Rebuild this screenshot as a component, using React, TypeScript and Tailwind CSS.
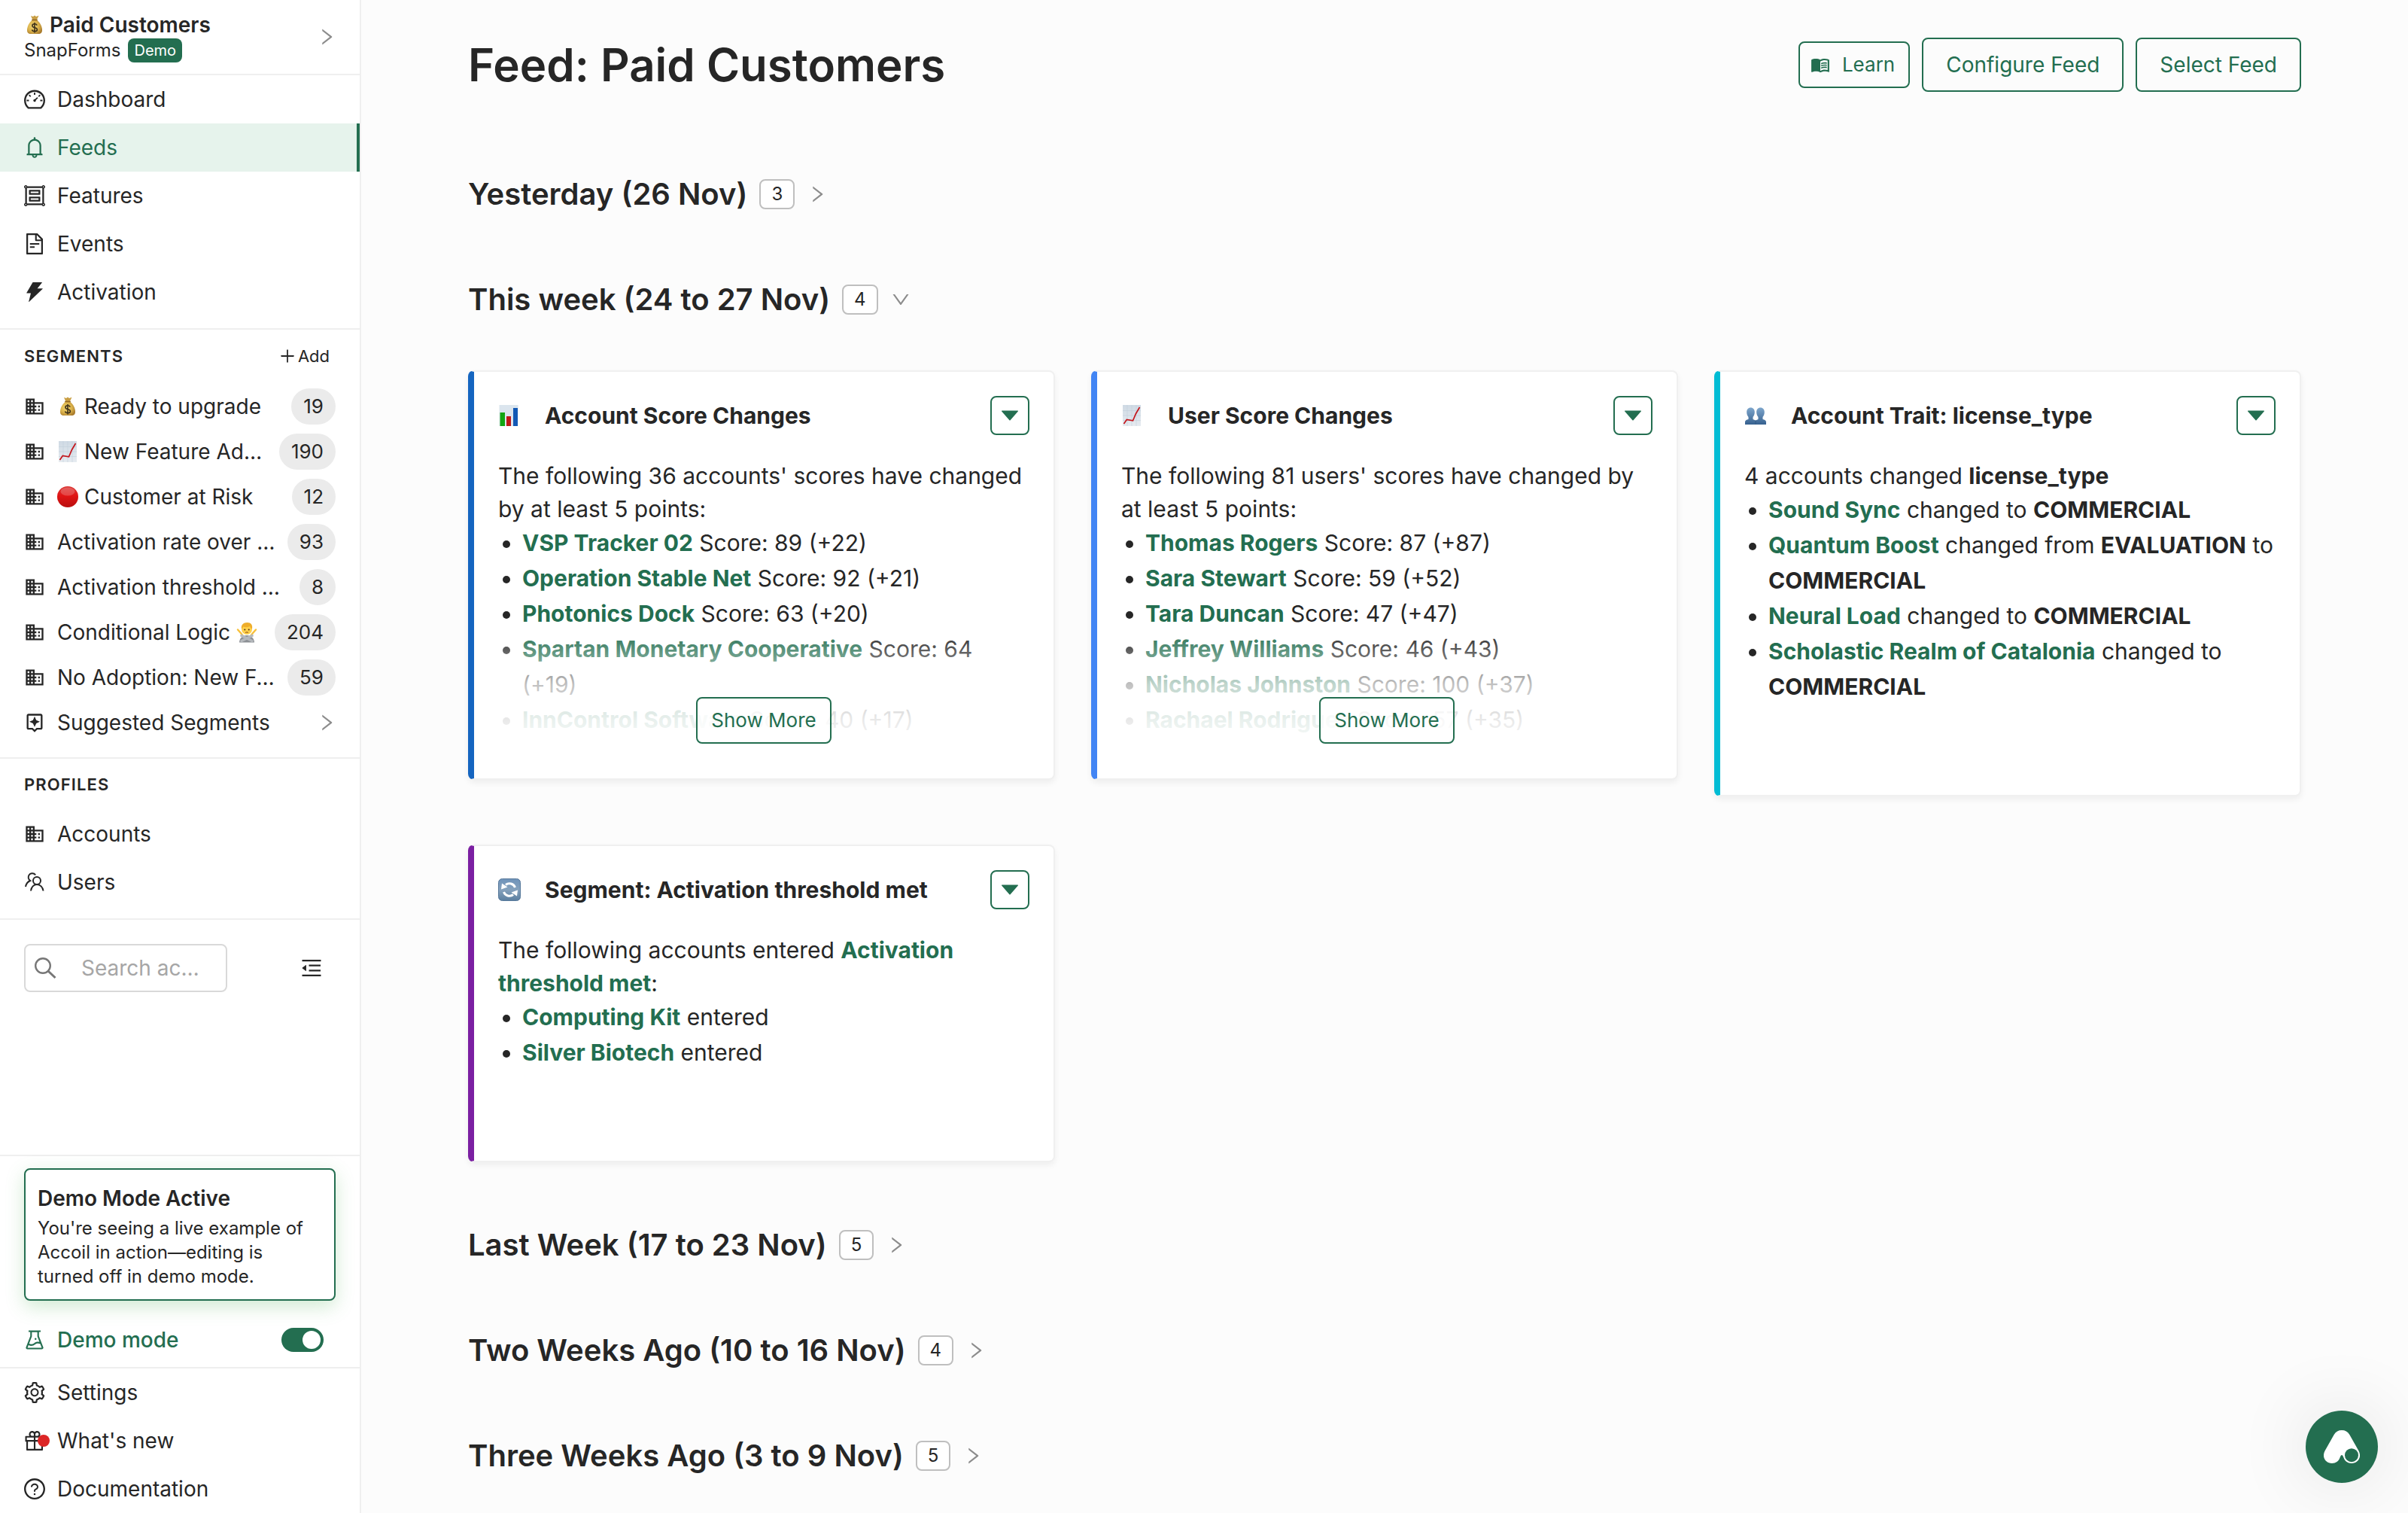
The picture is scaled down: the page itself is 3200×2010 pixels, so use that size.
import { Fragment, useState, type ReactNode } from 'react';
import {
  AiFillCaretDown, AiFillThunderbolt, AiOutlineBell, AiOutlineDashboard, AiOutlineDown,
  AiOutlineExperiment, AiOutlineFileText, AiOutlineGift, AiOutlineGroup, AiOutlineMenuFold,
  AiOutlinePlus, AiOutlineQuestionCircle, AiOutlineRight, AiOutlineSetting,
} from 'react-icons/ai';
import { MdBusiness, MdMenuBook, MdOutlineAssistant } from 'react-icons/md';

/* ---------- emoji drawings ---------- */

function MoneyBag() {
  return (
    <svg viewBox="0 0 28 28" className="size-7 shrink-0" role="img" aria-label="money bag">
      <defs>
        <radialGradient id="bag" cx="0.4" cy="0.45" r="0.65">
          <stop offset="0" stopColor="#f3d873" />
          <stop offset="0.6" stopColor="#d9b04a" />
          <stop offset="1" stopColor="#a87a2c" />
        </radialGradient>
      </defs>
      <path d="M9 2l3 1 2-1.500 2 1.500 3.500-1.200-2.700 5.700h-5.400z" fill="#c99f45" />
      <path d="M11.200 7.500h5.600c4.200 3 7.200 8.500 7.200 13.500 0 3.500-1.500 5-5 5H9c-3.500 0-5-1.500-5-5C4 16 7 10.500 11.200 7.500z" fill="url(#bag)" />
      <path d="M10.800 7.500h6.400" stroke="#8f6424" strokeWidth="1.500" strokeLinecap="round" />
      <path d="M17.200 14.600c-.6-1.300-1.700-1.800-3.200-1.800-1.800 0-3.100.9-3.100 2.400 0 3.500 6.500 1.500 6.500 5 0 1.500-1.400 2.500-3.400 2.500-1.700 0-3-.7-3.500-2.100M14 11v13.500" fill="none" stroke="#3f321b" strokeWidth="1.600" />
    </svg>
  );
}

function ChartUp() {
  return (
    <svg viewBox="0 0 28 28" className="size-7 shrink-0" role="img" aria-label="chart increasing">
      <defs>
        <linearGradient id="sheet" x1="0" y1="0" x2="0" y2="1">
          <stop offset="0" stopColor="#cfdae4" />
          <stop offset="1" stopColor="#e6ebf0" />
        </linearGradient>
      </defs>
      <rect x="2" y="0" width="24" height="28" fill="url(#sheet)" />
      <path d="M8 0v28M14 0v28M20 0v28M2 7.500h24M2 14h24M2 20.500h24" stroke="#c3d0dc" strokeWidth="0.600" />
      <path d="M3.500 25l3.800-5.500 8.200 1.300 4-9.300L24.500 3" fill="none" stroke="#c4161c" strokeWidth="1.700" />
    </svg>
  );
}

function RedCircle() {
  return (
    <svg viewBox="0 0 28 28" className="size-7 shrink-0" role="img" aria-label="red circle">
      <defs>
        <linearGradient id="red" x1="0" y1="0" x2="0" y2="1">
          <stop offset="0" stopColor="#dc3a37" />
          <stop offset="0.450" stopColor="#e01414" />
          <stop offset="1" stopColor="#b90f0f" />
        </linearGradient>
      </defs>
      <circle cx="14" cy="14" r="14" fill="url(#red)" />
      <ellipse cx="14" cy="7" rx="9.500" ry="5.500" fill="#fff" opacity="0.200" />
    </svg>
  );
}

function PersonNo() {
  return (
    <svg viewBox="0 0 28 28" className="size-7 shrink-0" role="img" aria-label="person gesturing no">
      <path d="M4 27.500c0-5 4-9.500 10-9.500s10 4.500 10 9.500z" fill="#8b8f94" />
      <path d="M2 10.500l4 4.500 3 4M26 10.500l-4 4.500-3 4" fill="none" stroke="#f8c03a" strokeWidth="2.400" strokeLinecap="round" />
      <circle cx="14" cy="10" r="7" fill="#ffd04a" />
      <path d="M7 9.500C6 4 9.500 1 14.500 1S22 4 21 9.500c-1.500-.5-2.500-2-3-3.500-3 1.500-6.500 1.500-9 .5-.5 1.500-1 2.500-2 3z" fill="#efae2b" />
      <circle cx="11.300" cy="10.500" r="1" fill="#55361b" />
      <circle cx="16.700" cy="10.500" r="1" fill="#55361b" />
      <path d="M12 14.500c1.200-.8 2.800-.8 4 0" fill="none" stroke="#8a4b16" strokeWidth="1" />
      <path d="M7 18.500l14 7M21 18.500L7 25.500" stroke="#b4b8bc" strokeWidth="3.600" strokeLinecap="round" />
    </svg>
  );
}

function BarChart() {
  return (
    <svg viewBox="0 0 28 28" className="size-7 shrink-0" role="img" aria-label="bar chart">
      <rect x="1.500" y="0" width="25" height="28" fill="#dbe5ee" />
      <rect x="2.500" y="10" width="6.500" height="18" fill="#12a512" />
      <rect x="11" y="15" width="6" height="13" fill="#c01818" />
      <rect x="20" y="4" width="6" height="24" fill="#1259b5" />
    </svg>
  );
}

function Busts() {
  return (
    <svg viewBox="0 0 30 28" className="h-7 w-[30px] shrink-0" role="img" aria-label="busts in silhouette">
      <defs>
        <linearGradient id="bust" x1="0" y1="0" x2="0" y2="1">
          <stop offset="0" stopColor="#7ea6cc" />
          <stop offset="1" stopColor="#36618f" />
        </linearGradient>
      </defs>
      <path d="M8.500 3.500c3.300 0 5.300 2.500 5.300 6 0 3-1 5-2.300 6.500v3l3.500 1.500 3.500-1.500v-3c-1.300-1.500-2.300-3.500-2.300-6.500 0-3.500 2-6 5.300-6s5.300 2.500 5.300 6c0 3-1 5-2.300 6.500v3c2.500.8 4.500 1.500 4.500 3.500v3.500H1V22.500c0-2 2-2.700 4.500-3.500v-3c-1.300-1.500-2.300-3.500-2.300-6.500 0-3.500 2-6 5.300-6z" fill="url(#bust)" />
      <path d="M15 20.500V26" stroke="#2f5680" strokeWidth="0.800" />
    </svg>
  );
}

function Cycle() {
  return (
    <svg viewBox="0 0 30 30" className="size-[30px] shrink-0" role="img" aria-label="counterclockwise arrows">
      <defs>
        <linearGradient id="cyc" x1="0" y1="0" x2="0" y2="1">
          <stop offset="0" stopColor="#6f93ba" />
          <stop offset="0.500" stopColor="#86a2bd" />
          <stop offset="1" stopColor="#5b7f9f" />
        </linearGradient>
      </defs>
      <rect x="0.500" y="0.500" width="29" height="29" rx="5" fill="url(#cyc)" stroke="#56789a" />
      <path d="M10 8.500a8 8 0 0 1 12.500 3.500M20 21.500A8 8 0 0 1 7.500 18" fill="none" stroke="#fff" strokeWidth="3" />
      <path d="M4 14.500l1-8 7.500 5zM26 15.500l-1 8-7.500-5z" fill="#fff" />
    </svg>
  );
}

/* ---------- line icons missing from the icon packs ---------- */

function UsersIcon() {
  return (
    <svg viewBox="0 0 28 28" className="size-7 shrink-0" fill="none" stroke="currentColor" strokeWidth="2" aria-hidden="true">
      <circle cx="17" cy="12" r="5" />
      <path d="M9 25.500c.5-5 3.800-8.500 8-8.500s8 3.500 8.500 8.500" />
      <path d="M15.200 4.300C13.800 2.600 12 2 10.200 2.300 7 2.800 5.200 5.500 5.800 8.500c.4 1.600 1.200 2.700 2.400 3.500-3.300 1.300-5.500 4.300-6.200 8" />
    </svg>
  );
}

function SearchIcon() {
  return (
    <svg viewBox="0 0 32 32" className="size-8 shrink-0" fill="none" stroke="currentColor" aria-hidden="true">
      <circle cx="13" cy="13" r="9.800" strokeWidth="2.400" />
      <path d="M20 20l9.500 9" strokeWidth="3" />
    </svg>
  );
}

function Logo() {
  return (
    <svg viewBox="0 0 48 44" className="h-11 w-12" aria-hidden="true">
      <path d="M24 0c4.500 0 8 2 10.200 5.800l12.300 21.700C51 36.500 45 44 37 44c-5 0-8.800-2.800-10.500-7.500-.9-2.500-1.600-3.500-2.500-3.500s-1.600 1-2.500 3.500C19.800 41.200 16 44 11 44 3 44-3 36.500 1.500 27.500L13.800 5.800C16 2 19.500 0 24 0z" fill="#fff" />
      <circle cx="37" cy="33.200" r="9" fill="#236e50" />
    </svg>
  );
}

/* ---------- sidebar ---------- */

type NavItem = { label: string; icon: ReactNode; active?: boolean; dot?: boolean };

const mainNav: NavItem[] = [
  { label: 'Dashboard', icon: <AiOutlineDashboard className="size-8 shrink-0" /> },
  { label: 'Feeds', icon: <AiOutlineBell className="size-8 shrink-0" />, active: true },
  { label: 'Features', icon: <AiOutlineGroup className="size-8 shrink-0" /> },
  { label: 'Events', icon: <AiOutlineFileText className="size-8 shrink-0" /> },
  { label: 'Activation', icon: <AiFillThunderbolt className="size-8 shrink-0" /> },
];

const profileNav: NavItem[] = [
  { label: 'Accounts', icon: <MdBusiness className="size-7" /> },
  { label: 'Users', icon: <UsersIcon /> },
];

const footerNav: NavItem[] = [
  { label: 'Settings', icon: <AiOutlineSetting className="size-8 shrink-0" /> },
  { label: "What's new", icon: <AiOutlineGift className="size-8 shrink-0" />, dot: true },
  { label: 'Documentation', icon: <AiOutlineQuestionCircle className="size-8 shrink-0" /> },
];

const segments: { label: string; count: number; before?: ReactNode; after?: ReactNode }[] = [
  { label: 'Ready to upgrade', count: 19, before: <MoneyBag /> },
  { label: 'New Feature Adoption', count: 190, before: <ChartUp /> },
  { label: 'Customer at Risk', count: 12, before: <RedCircle /> },
  { label: 'Activation rate over 50%', count: 93 },
  { label: 'Activation threshold met', count: 8 },
  { label: 'Conditional Logic', count: 204, after: <PersonNo /> },
  { label: 'No Adoption: New Feature', count: 59 },
];

function NavList({ items }: { items: NavItem[] }) {
  return (
    <ul>
      {items.map(item => (
        <li key={item.label}>
          <a
            href="#"
            className={`flex h-16 items-center gap-4 px-8 ${item.active ? 'border-r-4 border-[#236e50] bg-[#e6f3ec] text-[#236e50]' : ''}`}
          >
            <span className="relative flex size-7 items-center justify-center">
              {item.icon}
              {item.dot && <span className="absolute top-1.5 -right-1.5 size-4 rounded-full bg-[#dc2626]" />}
            </span>
            {item.label}
          </a>
        </li>
      ))}
    </ul>
  );
}

function Sidebar() {
  const [demo, setDemo] = useState(true);

  return (
    <aside className="flex w-[480px] shrink-0 flex-col border-r-2 border-[#efefef] bg-white">
      <button type="button" className="flex h-[100px] items-center justify-between border-b-2 border-[#efefef] pr-[30px] pl-8 text-left">
        <span>
          <span className="flex items-center gap-1.5 leading-9 font-semibold"><MoneyBag />Paid Customers</span>
          <span className="flex items-center gap-2.5 text-2xl leading-8">
            SnapForms
            <span className="rounded-lg bg-[#236e50] px-2 text-xl leading-8 text-white">Demo</span>
          </span>
        </span>
        <AiOutlineRight className="text-[28px] text-[#8c8c8c]" />
      </button>

      <nav aria-label="Main" className="border-b-2 border-[#efefef] pb-4">
        <NavList items={mainNav} />
      </nav>

      <section className="border-b-2 border-[#efefef] pt-2.5 pb-4">
        <div className="mb-3 flex h-[50px] items-center justify-between pr-10 pl-8">
          <h2 className="text-[22px] font-semibold tracking-wider">SEGMENTS</h2>
          <button type="button" className="flex items-center gap-0.5 text-[22px]"><AiOutlinePlus className="text-2xl" />Add</button>
        </div>
        <ul>
          {segments.map(s => (
            <li key={s.label}>
              <a href="#" className="flex h-[60px] items-center gap-4 px-8">
                <MdBusiness className="shrink-0 text-[28px]" />
                <span className="flex min-w-0 flex-1 items-center gap-2">
                  {s.before}
                  <span className="truncate">{s.label}</span>
                  {s.after}
                </span>
                <span className="rounded-full bg-[#ebebeb] px-4 text-[26px] leading-[48px]">{s.count}</span>
              </a>
            </li>
          ))}
        </ul>
        <a href="#" className="flex h-[60px] items-center gap-4 pr-[30px] pl-8">
          <MdOutlineAssistant className="text-[28px]" />
          <span className="flex-1">Suggested Segments</span>
          <AiOutlineRight className="text-[28px] text-[#8c8c8c]" />
        </a>
      </section>

      <section className="border-b-2 border-[#efefef] pt-2 pb-4">
        <h2 className="mb-2 px-8 text-[22px] leading-[52px] font-semibold tracking-wider">PROFILES</h2>
        <NavList items={profileNav} />
      </section>

      <div className="flex items-center justify-between px-8 py-8">
        <label className="flex h-16 w-[270px] items-center gap-8 rounded-lg border-2 border-[#d9d9d9] px-2.5 text-[#777]">
          <SearchIcon />
          <input aria-label="Search accounts" placeholder="Search accounts" className="w-full min-w-0 pr-4 text-ellipsis outline-none placeholder:text-[#a6a6a6]" />
        </label>
        <button type="button" aria-label="Collapse menu" className="mr-4"><AiOutlineMenuFold className="text-[32px]" /></button>
      </div>

      <div className="mt-auto border-y-2 border-[#efefef] px-8 pt-4">
        <div className="rounded-lg border-2 border-[#236e50] bg-white px-4 pt-5 pb-3.5 shadow-[0_8px_24px_rgba(76,175,80,0.25)]">
          <p className="mb-1.5 leading-9 font-semibold">Demo Mode Active</p>
          <p className="text-2xl leading-8">You're seeing a live example of Accoil in action—editing is turned off in demo mode.</p>
        </div>
        <label className="mt-4 flex h-[72px] items-center gap-4 text-[#236e50]">
          <span className="flex size-7 items-center justify-center"><AiOutlineExperiment className="size-8 shrink-0" /></span>
          <span className="flex-1 font-medium">Demo mode</span>
          <input type="checkbox" role="switch" checked={demo} onChange={() => setDemo(!demo)} className="peer sr-only" />
          <span className="mr-4 flex h-8 w-14 items-center rounded-full bg-[#bfbfbf] p-1 peer-checked:justify-end peer-checked:bg-[#236e50]">
            <span className="size-6 rounded-full bg-white" />
          </span>
        </label>
      </div>
      <nav aria-label="Help"><NavList items={footerNav} /></nav>
    </aside>
  );
}

/* ---------- feed ---------- */

function Name({ children }: { children: ReactNode }) {
  return <a href="#" className="font-bold text-[#236e50]">{children}</a>;
}

type CardProps = { title: string; icon: ReactNode; accent: string; intro: ReactNode; items: ReactNode[]; collapsed?: boolean };

function FeedCard({ title, icon, accent, intro, items, collapsed }: CardProps) {
  return (
    <article className={`rounded-lg border-2 border-l-8 border-[#f0f0f0] bg-white p-8 text-[30px] shadow-[0_4px_8px_rgba(0,0,0,0.06)] ${accent}`}>
      <header className="mb-8 flex items-center">
        <span className="flex w-[62px] items-center">{icon}</span>
        <h3 className="flex-1 font-bold">{title}</h3>
        <button type="button" aria-label={`${title} actions`} className="flex size-[52px] items-center justify-center rounded-lg border-2 border-[#236e50] text-[#236e50]">
          <AiFillCaretDown className="text-[32px]" />
        </button>
      </header>
      <div className={collapsed ? 'relative h-[392px] overflow-hidden' : 'pb-[88px]'}>
        <p className="leading-[44px]">{intro}</p>
        <ul className="list-disc pl-8 leading-[47px]">
          {items.map((item, i) => <li key={i}>{item}</li>)}
        </ul>
        {collapsed && (
          <div className="absolute inset-x-0 bottom-0 flex h-[164px] items-end justify-center bg-[linear-gradient(to_bottom,transparent,rgba(255,255,255,0.72)_44%,rgba(255,255,255,0.9)_73%,#fff)] pb-3.5">
            <button type="button" className="h-[62px] rounded-lg border-2 border-[#236e50] bg-white/70 px-[18px] text-[26px] text-[#236e50]">Show More</button>
          </div>
        )}
      </div>
    </article>
  );
}

function GroupHeading({ title, count, open }: { title: string; count: number; open?: boolean }) {
  return (
    <h2>
      <button type="button" aria-expanded={!!open} className="flex h-[60px] items-center">
        <span className="text-[40px] leading-[60px] font-semibold">{title}</span>
        <span className="ml-4 flex h-10 items-center rounded-lg border-2 border-[#bfbfbf] bg-white px-3.5 text-2xl">{count}</span>
        <span className="ml-4 text-[28px] text-[#8c8c8c]">{open ? <AiOutlineDown /> : <AiOutlineRight />}</span>
      </button>
    </h2>
  );
}

const accountScores: [string, string][] = [
  ['VSP Tracker 02', '89 (+22)'],
  ['Operation Stable Net', '92 (+21)'],
  ['Photonics Dock', '63 (+20)'],
  ['Spartan Monetary Cooperative', '64 (+19)'],
  ['InnControl Software', '40 (+17)'],
];

const userScores: [string, string][] = [
  ['Thomas Rogers', '87 (+87)'],
  ['Sara Stewart', '59 (+52)'],
  ['Tara Duncan', '47 (+47)'],
  ['Jeffrey Williams', '46 (+43)'],
  ['Nicholas Johnston', '100 (+37)'],
  ['Rachael Rodriguez', '57 (+35)'],
];

const scoreRows = (rows: [string, string][]) =>
  rows.map(([name, score]) => <Fragment key={name}><Name>{name}</Name> Score: {score}</Fragment>);

export default function App() {
  return (
    <div className="flex min-h-screen bg-[#fcfcfc] font-[Inter,sans-serif] text-[28px] leading-[44px] text-[#262626]">
      <Sidebar />

      <main className="min-w-0 flex-1 px-[142px] pt-[50px]">
        <header className="flex h-[72px] items-center justify-between">
          <h1 className="text-[60px] leading-[72px] font-semibold">Feed: Paid Customers</h1>
          <div className="flex items-center gap-4 text-[#236e50]">
            <button type="button" className="flex h-[62px] items-center gap-4 rounded-lg border-2 border-[#236e50] pr-[18px] pl-3.5 text-[26px]"><MdMenuBook />Learn</button>
            <button type="button" className="h-[72px] rounded-lg border-2 border-[#236e50] px-[30px]">Configure Feed</button>
            <button type="button" className="h-[72px] rounded-lg border-2 border-[#236e50] px-[30px]">Select Feed</button>
          </div>
        </header>

        <div className="mt-[106px] flex flex-col items-start gap-20">
          <GroupHeading title="Yesterday (26 Nov)" count={3} />
          <GroupHeading title="This week (24 to 27 Nov)" count={4} open />
        </div>

        <div className="mt-16 grid grid-cols-3 items-start gap-x-12 gap-y-16">
          <FeedCard
            title="Account Score Changes"
            icon={<BarChart />}
            accent="border-l-[#1565c0]"
            intro="The following 36 accounts' scores have changed by at least 5 points:"
            items={scoreRows(accountScores)}
            collapsed
          />
          <FeedCard
            title="User Score Changes"
            icon={<ChartUp />}
            accent="border-l-[#4285f4]"
            intro="The following 81 users' scores have changed by at least 5 points:"
            items={scoreRows(userScores)}
            collapsed
          />
          <FeedCard
            title="Account Trait: license_type"
            icon={<Busts />}
            accent="border-l-[#00bcd4]"
            intro={<>4 accounts changed <b className="font-bold">license_type</b></>}
            items={[
              <><Name>Sound Sync</Name> changed to <b className="font-bold">COMMERCIAL</b></>,
              <><Name>Quantum Boost</Name> changed from <b className="font-bold">EVALUATION</b> to <b className="font-bold">COMMERCIAL</b></>,
              <><Name>Neural Load</Name> changed to <b className="font-bold">COMMERCIAL</b></>,
              <><Name>Scholastic Realm of Catalonia</Name> changed to <b className="font-bold">COMMERCIAL</b></>,
            ]}
          />
          <FeedCard
            title="Segment: Activation threshold met"
            icon={<Cycle />}
            accent="border-l-[#7b1fa2]"
            intro={<>The following accounts entered <Name>Activation threshold met</Name>:</>}
            items={[<><Name>Computing Kit</Name> entered</>, <><Name>Silver Biotech</Name> entered</>]}
          />
        </div>

        <div className="mt-20 flex flex-col items-start gap-20">
          <GroupHeading title="Last Week (17 to 23 Nov)" count={5} />
          <GroupHeading title="Two Weeks Ago (10 to 16 Nov)" count={4} />
          <GroupHeading title="Three Weeks Ago (3 to 9 Nov)" count={5} />
        </div>
      </main>

      <button type="button" aria-label="Open help" className="fixed right-10 bottom-10 flex size-24 items-center justify-center rounded-full bg-[#236e50] shadow-[0_0_100px_rgba(0,0,0,0.12)]">
        <Logo />
      </button>
    </div>
  );
}
